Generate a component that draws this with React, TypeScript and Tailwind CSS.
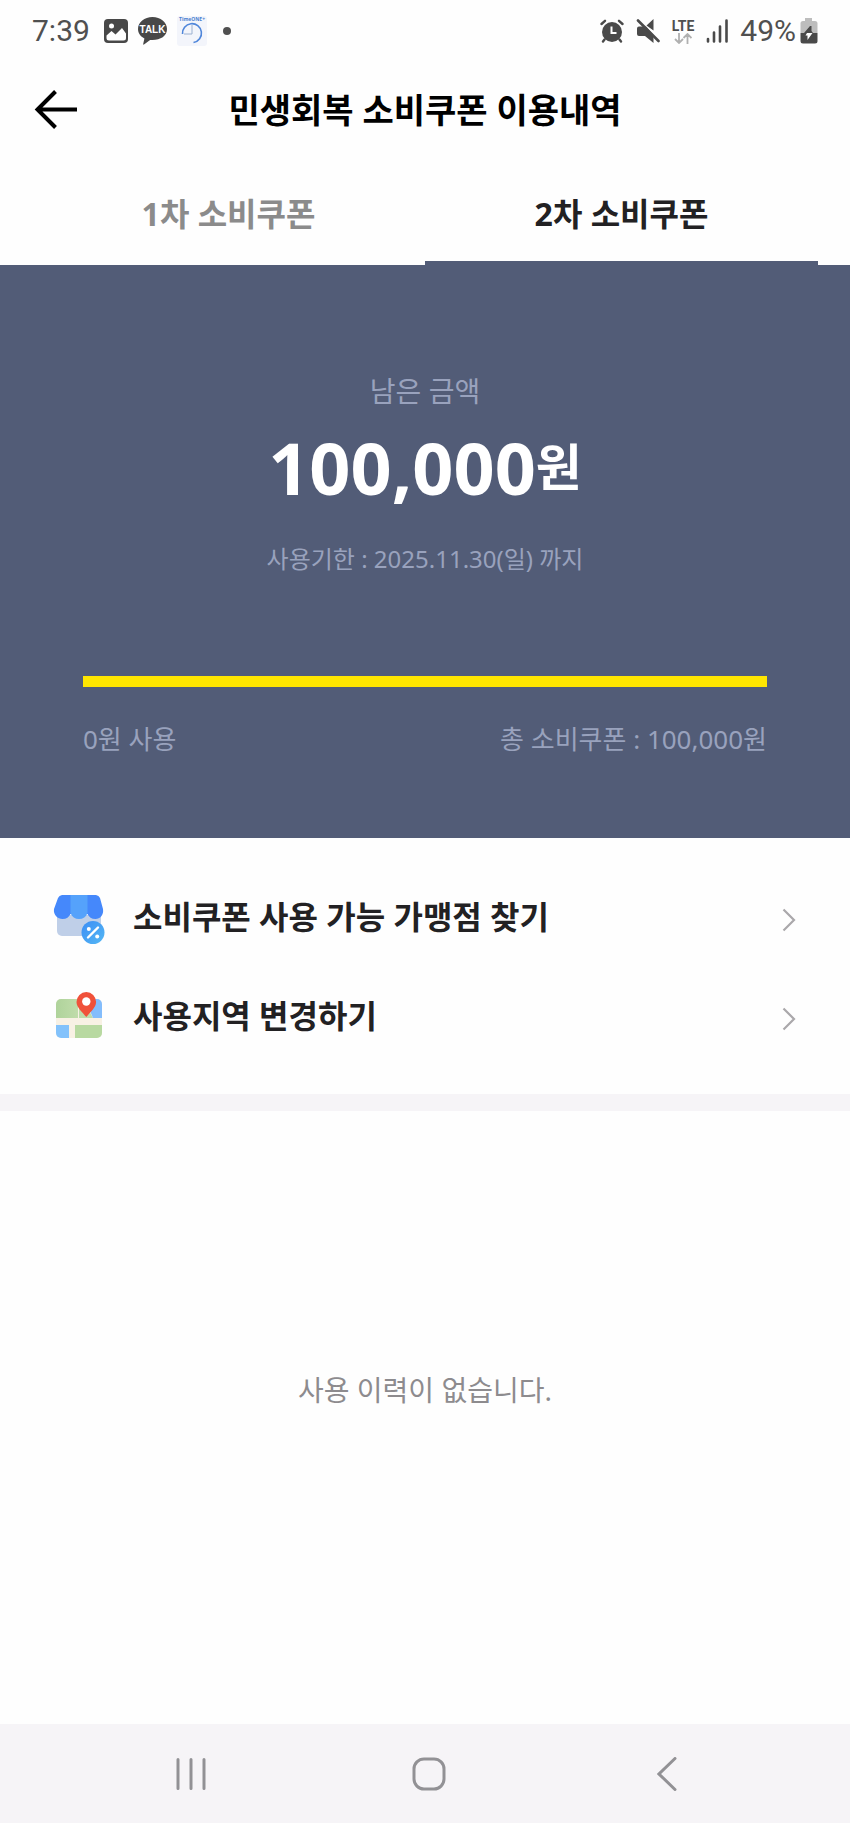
import React, { useState } from 'react';

const AlarmIcon = () => (
  <svg width="24" height="24" viewBox="0 0 24 24" fill="none" stroke="#4a4a4a" strokeLinecap="round">
    <circle cx="12" cy="13" r="10" fill="#4a4a4a" stroke="none" />
    <path d="M1.500 5 5 1.800M22.500 5 19 1.800M4.500 20.500 3 22.500M19.500 20.500 21 22.500" strokeWidth="2.400" />
    <path d="M11.500 7.500v6.500h5" stroke="#fff" strokeWidth="2" strokeLinecap="butt" />
  </svg>
);

const MuteIcon = () => (
  <svg width="24" height="24" viewBox="0 0 24 24" fill="#4a4a4a">
    <path d="M3 7.500h7L17.500 16v8L9 17H3a2 2 0 0 1-2-2V9.500a2 2 0 0 1 2-2zM10.500 6.500 17.500 0v11.500z" />
    <path d="M2 1.500 22.500 22" stroke="#4a4a4a" strokeWidth="2.600" strokeLinecap="round" />
  </svg>
);

const GalleryIcon = () => (
  <svg width="24" height="24" viewBox="0 0 24 24">
    <rect width="24" height="24" rx="4" fill="#484848" />
    <circle cx="7.500" cy="7" r="2.500" fill="#fff" />
    <path d="M2.500 16.500 7.500 12l4 3.500 6.500-6.500 4 5.500V19a2.500 2.500 0 0 1-2.500 2.500H5A2.500 2.500 0 0 1 2.500 19z" fill="#fff" />
  </svg>
);

const TalkIcon = () => (
  <svg width="29" height="28" viewBox="0 0 29 28">
    <path d="M14.500 0C22.500 0 29 5 29 12s-6.500 11-14.500 11c-.8 0-1.600 0-2.400-.1L6 27.500c-.6.4-1 0-.8-.6l1.200-5.500C2.500 19.500 0 16 0 12 0 5 6.500 0 14.500 0z" fill="#484848" />
    <text x="14.500" y="15.500" textAnchor="middle" fontSize="10" fontWeight="700" fontFamily="Liberation Sans, sans-serif" fill="#fff">TALK</text>
  </svg>
);

const TimeOneIcon = () => (
  <svg width="30" height="30" viewBox="0 0 30 30" fill="none">
    <rect width="30" height="30" rx="3" fill="#f3f5fb" />
    <text x="15" y="4.500" textAnchor="middle" fontSize="5" fontWeight="700" fontFamily="Open Sans, sans-serif" fill="#4a7fd0">TimeONE+</text>
    <path d="M5.500 18a9.500 9.500 0 1 1 11 8.500" stroke="#4f86da" strokeWidth="1.600" />
    <path d="M15 9v9H7" stroke="#9bb0d0" strokeWidth="1" />
  </svg>
);

const SignalIcon = () => (
  <svg width="22" height="24" viewBox="0 0 22 24" stroke="#4a4a4a" strokeWidth="2.600" strokeLinecap="round">
    <path d="M2 20v2.500M8 13.500v9M14 7.500v15M20.500 1.500v21" />
  </svg>
);

const BatteryIcon = () => (
  <svg width="18" height="26" viewBox="0 0 18 26">
    <path d="M5 0h7v3h3a2.500 2.500 0 0 1 2.500 2.500V15H.5V5.500A2.500 2.500 0 0 1 3 3h2z" fill="#bdbdbd" />
    <path d="M.5 15h17v8a2.500 2.500 0 0 1-2.500 2.500H3A2.500 2.500 0 0 1 .5 23z" fill="#4a4a4a" />
    <path d="M10 8 4 15h9l-1.500-2V8z" fill="#4a4a4a" />
    <path d="M7 15h5.500L7.500 22v-4.500H5.500z" fill="#fff" />
  </svg>
);

const StoreIcon = () => (
  <svg width="52" height="50" viewBox="0 0 52 50">
    <defs>
      <linearGradient id="store-badge" x1="0" y1="0" x2="1" y2="1">
        <stop offset="0" stopColor="#3b8df5" />
        <stop offset="1" stopColor="#55b8f4" />
      </linearGradient>
    </defs>
    <path d="M4 20h44v16a5 5 0 0 1-5 5H9a5 5 0 0 1-5-5z" fill="#bfcfe8" />
    <path d="M9 0h34a5 5 0 0 1 4 3L50 14c1 6-3 10-7.500 10-4 0-6.500-2-8-5h-17c-1.500 3-4 5-8 5C5 24 0 20 1 14L5 3a5 5 0 0 1 4-3z" fill="#4588fb" />
    <path d="M17.500 0h17v18c-1.500 4-4.500 6-8.500 6s-7-2-8.500-6z" fill="#55a2fb" />
    <circle cx="40" cy="37.500" r="11.500" fill="url(#store-badge)" />
    <path d="M35 42.500 45 32.500" stroke="#fff" strokeWidth="2.400" strokeLinecap="round" />
    <circle cx="35.800" cy="34" r="2" fill="#fff" />
    <circle cx="44.200" cy="41.500" r="2" fill="#fff" />
  </svg>
);

const MapIcon = () => (
  <svg width="52" height="54" viewBox="0 2 52 54">
    <defs>
      <linearGradient id="map-green" x1="0" y1="0" x2="1" y2="0">
        <stop offset="0" stopColor="#afd39b" />
        <stop offset="1" stopColor="#c0dcaa" />
      </linearGradient>
      <clipPath id="map-tile">
        <rect x="3" y="9" width="46" height="39" rx="5" />
      </clipPath>
    </defs>
    <g clipPath="url(#map-tile)">
      <path d="M3 9h46v39H3z" fill="#f8f1e4" />
      <path d="M3 9h22v19H3z" fill="url(#map-green)" />
      <path d="M26 9h4l10 19H26z" fill="#bddbab" />
      <path d="M32 9h17v19h-9z" fill="#84bdfc" />
      <path d="M3 35h13v13H3z" fill="#83c2fb" />
      <path d="M22 35h27v13H22z" fill="#b8d9a1" />
    </g>
    <path d="M33.300 27c-4-5-9.800-9.500-9.800-15a9.800 10 0 0 1 19.600 0c0 5.500-5.800 10-9.800 15z" fill="#f0513a" />
    <circle cx="33.300" cy="11.500" r="4.200" fill="#fff" />
  </svg>
);

const ChevronIcon = () => (
  <svg width="14" height="24" viewBox="0 0 14 24" fill="none" stroke="#aaa8ab" strokeWidth="2.200">
    <path d="M1.500 1.500 12 12 1.500 22.500" />
  </svg>
);

const StatusBar = () => (
  <div className="flex h-[62px] items-center justify-between pl-8 pr-8 font-[Roboto,sans-serif] text-[30px] leading-[30px] text-[#505050]">
    <div className="flex items-center">
      <span>7:39</span>
      <span className="ml-3.5 flex items-center gap-2.5">
        <GalleryIcon />
        <TalkIcon />
        <TimeOneIcon />
      </span>
      <span className="ml-4 h-2 w-2 rounded-full bg-[#505050]" />
    </div>
    <div className="flex items-center">
      <AlarmIcon />
      <span className="ml-3 mr-3">
        <MuteIcon />
      </span>
      <span className="flex flex-col items-center text-[14px] font-bold leading-[14px]">
        LTE
        <svg width="18" height="11" viewBox="0 0 18 11" fill="none" stroke="#b0b0b0" strokeWidth="1.800">
          <path d="M5 0v10M1 6l4 4 4-4M13.500 11V1M9.500 5l4-4 4 4" />
        </svg>
      </span>
      <span className="ml-3 mr-3">
        <SignalIcon />
      </span>
      <span className="mr-1">49%</span>
      <BatteryIcon />
    </div>
  </div>
);

const tabs = ['1차 소비쿠폰', '2차 소비쿠폰'];

const menus = [
  { label: '소비쿠폰 사용 가능 가맹점 찾기', icon: <StoreIcon /> },
  { label: '사용지역 변경하기', icon: <MapIcon /> },
];

export default function App() {
  const [active, setActive] = useState(1);

  return (
    <div className="flex min-h-screen flex-col bg-[#fefefe] font-['Noto_Sans','Noto_Sans_CJK_KR',sans-serif] text-[#222123]">
      <StatusBar />

      <header className="grid h-24 grid-cols-[64px_1fr_64px] items-center px-8">
        <button aria-label="뒤로">
          <svg width="48" height="40" viewBox="0 0 48 40" fill="none" stroke="#000" strokeWidth="4">
            <path d="M23.500 1.500 5.500 19.500 23.500 37.500M5 19.500h40" />
          </svg>
        </button>
        <h1 className="text-center text-[34px] font-bold leading-[40px] text-black">민생회복 소비쿠폰 이용내역</h1>
      </header>

      <div role="tablist" className="mx-8 grid h-[107px] grid-cols-2">
        {tabs.map((tab, i) => (
          <button
            key={tab}
            role="tab"
            aria-selected={active === i}
            onClick={() => setActive(i)}
            className={`border-b-4 pt-2 text-[32px] font-bold leading-[40px] ${
              active === i ? 'border-[#525c77] text-[#222123]' : 'border-transparent text-[#8b8b8b]'
            }`}
          >
            {tab}
          </button>
        ))}
      </div>

      {/* Balance */}
      <section className="bg-[#525c77] px-[83px] pb-[83px] pt-[106px] text-center text-[#99a2bd]">
        <p className="text-[28px] leading-[40px]">남은 금액</p>
        <p className="mt-4 flex items-center justify-center font-bold text-white">
          <span className="text-[72px] leading-[80px]">100,000</span>
          <span className="text-[50px] leading-[80px]">원</span>
        </p>
        <p className="mt-9 text-[24px] leading-[32px]">사용기한 : 2025.11.30(일) 까지</p>
        <div role="progressbar" aria-label="남은 금액" aria-valuenow={100} className="mt-[101px] h-[11px] bg-[#ffe600]" />
        <div className="mt-9 flex justify-between text-[26px] leading-[32px]">
          <span>0원 사용</span>
          <span>총 소비쿠폰 : 100,000원</span>
        </div>
      </section>

      {/* Menu */}
      <nav className="flex flex-col border-b-[17px] border-[#f6f4f7] pb-[26px] pt-8">
        {menus.map((menu) => (
          <a key={menu.label} href="#" className="flex h-[99px] items-center pl-[53px] pr-[54px]">
            {menu.icon}
            <span className="ml-7 flex-1 pb-1.5 text-[32px] font-bold leading-[40px]">{menu.label}</span>
            <ChevronIcon />
          </a>
        ))}
      </nav>

      {/* History */}
      <main className="flex flex-1 items-center justify-center pb-14">
        <p className="text-[28px] leading-[40px] text-[#8d8b8e]">사용 이력이 없습니다.</p>
      </main>

      <footer className="grid h-[99px] grid-cols-3 items-center bg-[#f6f4f7] pl-[72px] pr-16">
        <button aria-label="최근 앱" className="flex justify-center">
          <svg width="34" height="34" viewBox="0 0 34 34" stroke="#929195" strokeWidth="3" strokeLinecap="round">
            <path d="M4 2.500v29M17 2.500v29M30 2.500v29" />
          </svg>
        </button>
        <button aria-label="홈" className="flex justify-center">
          <svg width="34" height="34" viewBox="0 0 34 34" fill="none" stroke="#929195" strokeWidth="3">
            <rect x="2" y="2" width="30" height="30" rx="10" />
          </svg>
        </button>
        <button aria-label="이전" className="flex justify-center">
          <svg width="20" height="34" viewBox="0 0 20 34" fill="none" stroke="#929195" strokeWidth="3" strokeLinecap="round">
            <path d="M18 1.500 2 17l16 15.500" />
          </svg>
        </button>
      </footer>
    </div>
  );
}
